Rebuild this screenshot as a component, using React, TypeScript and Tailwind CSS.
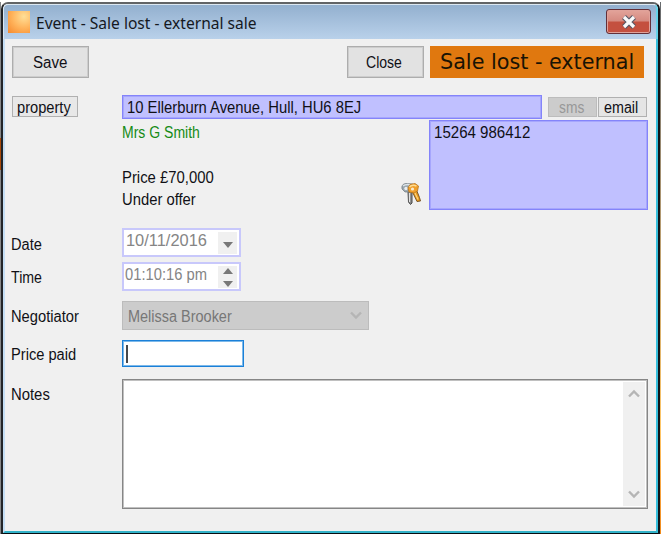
import { useLayoutEffect, useRef } from "react";

type FitProps = { text: string; width: number; className?: string };

// One line of text condensed or widened to an exact measure.
function Fit({ text, width, className = "" }: FitProps) {
  const ref = useRef<HTMLSpanElement>(null);
  useLayoutEffect(() => {
    const el = ref.current;
    if (el) el.style.transform = `scaleX(${width / el.offsetWidth})`;
  }, [width, text]);
  return (
    <span className={`block h-5 leading-[22px] ${className}`} style={{ width }}>
      <span ref={ref} className="inline-block origin-left whitespace-nowrap">
        {text}
      </span>
    </span>
  );
}

function Keys() {
  return (
    <svg width="22" height="24" viewBox="0 0 22 24" fill="none">
      <path d="M8 10 L8.500 20 L10.500 22.500 L12 21 L12 10" fill="#8a8a8a" stroke="#4b4b4b" strokeWidth="1" />
      <path d="M9.500 11 V20" stroke="#e2e2e2" strokeWidth="1.200" />
      <path d="M2 7 Q1 2 6 1.500 L13 2 L10 10 L5 10 Z" fill="#9aa6ae" stroke="#6e777d" strokeWidth="0.700" />
      <path d="M3 4 Q6 1.500 11 3" stroke="#dde5ea" strokeWidth="1.600" />
      <circle cx="6" cy="6.500" r="1.700" fill="#eceff1" />
      <path d="M12 9 L17 19.500 L20.500 19 L19.500 15.500 L16.500 8" fill="#e89a1c" stroke="#6f4a1e" strokeWidth="0.900" />
      <path d="M14.500 10 L18 17.500" stroke="#ffd47a" strokeWidth="1.200" />
      <path d="M8 6 L10 2.500 L15 1.500 L18.500 4 L17.500 9 L14 11 L9 10 Z" fill="#f0a02c" stroke="#b9741a" strokeWidth="0.800" />
      <path d="M9.500 5 Q12 2 16.500 4" stroke="#ffdc92" strokeWidth="1.400" />
      <circle cx="12.500" cy="7" r="1.600" fill="#f6ead2" />
    </svg>
  );
}

function Chevron({ up = false }: { up?: boolean }) {
  return (
    <svg width="12" height="9" viewBox="0 0 12 9" fill="none">
      <path d={up ? "M1 7.500 L6 2.500 L11 7.500" : "M1 1.500 L6 6.500 L11 1.500"} stroke="#b5b5b5" strokeWidth="2.400" />
    </svg>
  );
}

function Triangle({ up = false }: { up?: boolean }) {
  return (
    <svg width="10" height="6" viewBox="0 0 10 6">
      <path d={up ? "M0 6 L5 0 L10 6 Z" : "M0 0 L10 0 L5 6 Z"} fill="#787878" />
    </svg>
  );
}

export default function App() {
  return (
    <div className="flex h-[536px] w-[661px] flex-col overflow-hidden bg-white font-['Liberation_Sans',Arial,sans-serif] text-base text-[#101016]">
      <div className="h-0.5" />
      <div className="flex h-[532px]">
        <div className="flex w-px flex-col bg-[#858789]">
          <div className="mt-[136px] h-8 bg-[#a84a0c]" />
        </div>
        <div className="flex h-[532px] w-[659px] flex-col rounded-t-[7px] border-x-2 border-t-2 border-b border-t-[#626466] border-r-[#101418] border-b-[#080c10] border-l-[#222427] bg-[#f0f0f0]">
          <header className="flex h-[35px] shrink-0 rounded-t-[5px] border-t border-r-2 border-l border-[#dce8f2] border-r-[#65d2e8] bg-linear-to-b from-[#93b0cf] to-[#b9d1ea] pl-1">
            <div className="mt-1.5 h-[22px] w-[22px] bg-[radial-gradient(circle_at_72%_25%,#ffdf97_0%,#ffb45c_50%,#f6892d_100%)]" />
            <Fit text="Event - Sale lost - external sale" width={221} className="mt-[7px] ml-1.5 font-['Noto_Sans',sans-serif] text-[16.5px] text-[#15191f]" />
            <div className="mt-1 ml-auto mr-[5px] flex h-[25px] w-[45px] items-center justify-center rounded-[3px] border border-[#632f38] bg-linear-to-b from-[#e3a49b] from-0% via-[#d58a80] via-48% to-[#c4503f] to-52% shadow-[inset_0_0_0_1px_#e0a29a]">
              <svg width="18" height="14" viewBox="0 0 18 14">
                <path d="M4 2 L14 12 M14 2 L4 12" stroke="#565766" strokeWidth="5.500" />
                <path d="M4 2 L14 12 M14 2 L4 12" stroke="#fafafa" strokeWidth="3.200" />
              </svg>
            </div>
          </header>
          <main className="flex min-h-0 flex-1 flex-col border-r-2 border-b-2 border-l-2 border-r-[#37bfdc] border-b-[#32b2c8] border-l-[#c5def4] pl-[7px]">
            <div className="mt-[7px] flex h-8">
              <button className="flex w-[77px] items-center justify-center border border-[#adadad] bg-[#e2e2e2] shadow-[inset_0_0_0_1px_#cdcdcd]">
                <Fit text="Save" width={34} className="-ml-px" />
              </button>
              <button className="ml-[258px] flex w-[77px] items-center justify-center border border-[#adadad] bg-[#e2e2e2] shadow-[inset_0_0_0_1px_#cdcdcd]">
                <Fit text="Close" width={36} className="-ml-[3px]" />
              </button>
              <div className="ml-1.5 flex w-[214px] items-center bg-[#e0780f] pl-[10px]">
                <Fit text="Sale lost - external" width={194} className="-mt-0.5 font-['DejaVu_Sans_Condensed','DejaVu_Sans',sans-serif] text-[21.5px] text-[#191304]" />
              </div>
            </div>
            <div className="mt-4 flex h-[25px] items-center">
              <button className="flex h-[21px] w-[66px] items-center justify-center border border-[#b0b0b0] bg-[#e8e8e8]">
                <Fit text="property" width={54} className="-ml-[3px]" />
              </button>
              <div className="ml-11 flex h-6 w-[420px] items-center border border-[#8484fa] bg-[#c0c0ff] pl-1 shadow-[inset_0_0_0_1px_#a6a6fd]">
                <Fit text="10 Ellerburn Avenue, Hull, HU6 8EJ" width={234} />
              </div>
              <button className="mt-px ml-[6px] flex h-5 w-[49px] items-center justify-center border border-[#bcbcbc] bg-[#cccccc] text-[#989898]">
                <Fit text="sms" width={25} className="-ml-[3px]" />
              </button>
              <button className="mt-px ml-[1px] flex h-5 w-[49px] items-center justify-center border border-[#b0b0b0] bg-[#e5e5e5]">
                <Fit text="email" width={34} className="-ml-[3px]" />
              </button>
            </div>
            <div className="mt-px flex h-[90px]">
              <div className="ml-[110px] w-[278px] pt-[2px]">
                <Fit text="Mrs G Smith" width={78} className="text-[#168b16]" />
                <Fit text="Price £70,000" width={92} className="mt-[25px]" />
                <Fit text="Under offer" width={74} className="mt-[2px]" />
              </div>
              <div className="w-[29px] pt-[62px]"><Keys /></div>
              <div className="w-[219px] border border-[#8484fa] bg-[#c0c0ff] pt-px pl-1 shadow-[inset_0_0_0_1px_#a6a6fd]">
                <Fit text="15264 986412" width={96} />
              </div>
            </div>
            <div className="mt-[18px] flex h-[29px]">
              <Fit text="Date" width={31} className="mt-[6px] -ml-px" />
              <div className="ml-auto mr-[415px] flex w-[119px] border-2 border-[#c8c8fb] bg-white pl-0.5 text-[#858585]">
                <Fit text="10/11/2016" width={81} />
                <div className="mt-0.5 ml-auto mr-0.5 flex h-[22px] w-[19px] items-center justify-center bg-[#f0f0f0] pt-[3px]"><Triangle /></div>
              </div>
            </div>
            <div className="mt-[5px] flex h-[29px]">
              <Fit text="Time" width={31} className="mt-[5px] -ml-px" />
              <div className="ml-auto mr-[415px] flex w-[119px] border-2 border-[#c8c8fb] bg-white pl-px text-[#858585]">
                <Fit text="01:10:16 pm" width={82} />
                <div className="mt-0.5 ml-auto mr-0.5 flex h-[22px] w-[19px] flex-col items-center justify-center gap-[7px] bg-[#f0f0f0]">
                  <Triangle up />
                  <Triangle />
                </div>
              </div>
            </div>
            <div className="mt-[10px] flex h-[29px]">
              <Fit text="Negotiator" width={68} className="mt-[5px] -ml-px" />
              <div className="ml-auto mr-[287px] flex w-[247px] items-center border border-[#bcbcbc] bg-[#cccccc] pr-[6px] pl-[5px] text-[#777777]">
                <Fit text="Melissa Brooker" width={104} />
                <div className="ml-auto flex"><Chevron /></div>
              </div>
            </div>
            <div className="mt-[10px] flex h-[27px]">
              <Fit text="Price paid" width={65} className="mt-[4px] -ml-px" />
              <div className="ml-auto mr-[412px] flex w-[122px] items-center border border-[#1a80d8] bg-white pl-[3px] shadow-[inset_0_0_0_1px_#7db9ea]">
                <div className="h-[18px] w-0.5 bg-[#45484c]" />
              </div>
            </div>
            <div className="mt-3 flex h-[130px]">
              <Fit text="Notes" width={39} className="mt-[5px] -ml-px" />
              <div className="ml-auto mr-2 flex w-[526px] justify-end border border-[#868686] bg-white p-0.5 shadow-[inset_0_0_0_1px_#c0c0c0]">
                <div className="flex w-[22px] flex-col items-center justify-between bg-[#f0f0f0] py-[7px]">
                  <Chevron up />
                  <Chevron />
                </div>
              </div>
            </div>
          </main>
        </div>
        <div className="w-px bg-linear-to-b from-[#686b6e] via-[#ffc768] via-80% to-[#ef8a18]" />
      </div>
    </div>
  );
}
